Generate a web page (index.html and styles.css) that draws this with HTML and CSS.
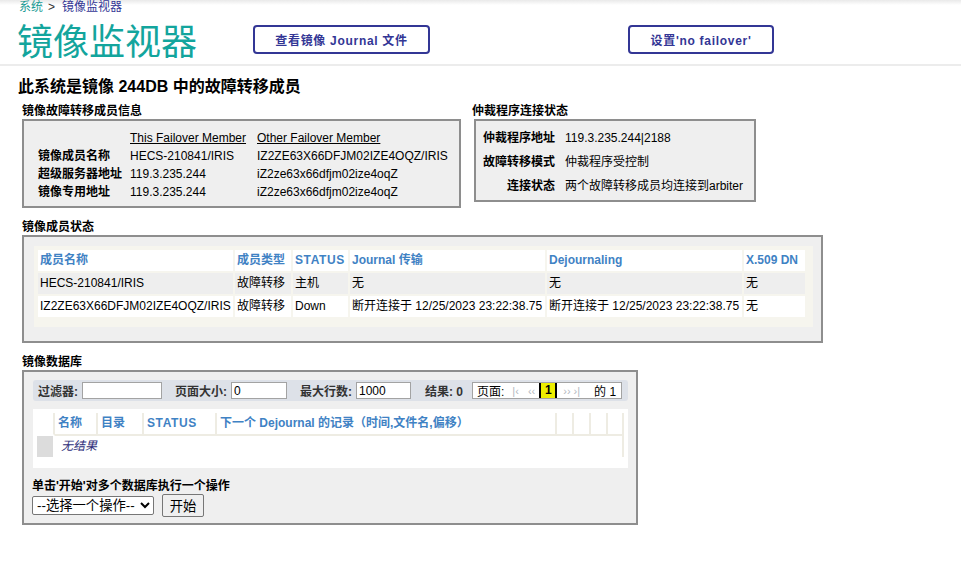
FILE: index.html
```html
<!DOCTYPE html>
<html lang="zh-CN">
<head>
<meta charset="utf-8">
<title>镜像监视器</title>
<link rel="stylesheet" href="styles.css">
</head>
<body>
<header class="top">
  <div class="crumbs"><span class="crumb-link">系统</span><span class="crumb-sep">&gt;</span><span class="crumb-cur">镜像监视器</span></div>
  <div class="titlebar">
    <h1 class="title">镜像监视器</h1>
    <button class="hbtn hbtn-journal">查看镜像 Journal 文件</button>
    <button class="hbtn hbtn-nofail">设置'no failover'</button>
  </div>
</header>
<main class="content">
  <h2 class="page-head">此系统是镜像 244DB 中的故障转移成员</h2>
  <div class="row-top">
    <section class="group group-info">
      <h3 class="sec-title">镜像故障转移成员信息</h3>
      <div class="box box-info">
        <div class="info-grid">
          <span></span><span class="u">This Failover Member</span><span class="u">Other Failover Member</span>
          <span class="lbl">镜像成员名称</span><span>HECS-210841/IRIS</span><span>IZ2ZE63X66DFJM02IZE4OQZ/IRIS</span>
          <span class="lbl">超级服务器地址</span><span>119.3.235.244</span><span>iZ2ze63x66dfjm02ize4oqZ</span>
          <span class="lbl">镜像专用地址</span><span>119.3.235.244</span><span>iZ2ze63x66dfjm02ize4oqZ</span>
        </div>
      </div>
    </section>
    <section class="group group-arb">
      <h3 class="sec-title">仲裁程序连接状态</h3>
      <div class="box box-arb">
        <div class="arb-grid">
          <span class="lbl">仲裁程序地址</span><span>119.3.235.244|2188</span>
          <span class="lbl">故障转移模式</span><span>仲裁程序受控制</span>
          <span class="lbl">连接状态</span><span>两个故障转移成员均连接到arbiter</span>
        </div>
      </div>
    </section>
  </div>

  <section class="group group-members">
    <h3 class="sec-title">镜像成员状态</h3>
    <div class="box box-members">
      <div class="members-panel">
        <table class="members">
          <colgroup><col class="mc-name"><col class="mc-type"><col class="mc-status"><col class="mc-journal"><col class="mc-dejour"><col class="mc-x509"></colgroup>
          <thead>
            <tr><th>成员名称</th><th>成员类型</th><th class="th-status">STATUS</th><th>Journal 传输</th><th>Dejournaling</th><th>X.509 DN</th></tr>
          </thead>
          <tbody>
            <tr class="odd"><td>HECS-210841/IRIS</td><td>故障转移</td><td>主机</td><td>无</td><td>无</td><td>无</td></tr>
            <tr class="even"><td>IZ2ZE63X66DFJM02IZE4OQZ/IRIS</td><td>故障转移</td><td>Down</td><td>断开连接于 12/25/2023 23:22:38.75</td><td>断开连接于 12/25/2023 23:22:38.75</td><td>无</td></tr>
          </tbody>
        </table>
      </div>
    </div>
  </section>

  <section class="group group-db">
    <h3 class="sec-title">镜像数据库</h3>
    <div class="box box-db">
      <div class="filterbar">
        <label class="flabel">过滤器:</label><input class="finput fi-filter" type="text" value="">
        <label class="flabel">页面大小:</label><input class="finput fi-size" type="text" value="0">
        <label class="flabel">最大行数:</label><input class="finput fi-max" type="text" value="1000">
        <span class="flabel results">结果: 0</span>
        <div class="pager">
          <span class="pg-label">页面:</span>
          <span class="pg-arrow pg-first">|‹</span>
          <span class="pg-arrow pg-prev">‹‹</span>
          <span class="pg-cur">1</span>
          <span class="pg-arrow pg-next">››</span>
          <span class="pg-arrow pg-last">›|</span>
          <span class="pg-of">的 1</span>
        </div>
      </div>
      <div class="db-panel">
        <table class="dbs">
          <colgroup><col class="dc-sel"><col class="dc-name"><col class="dc-dir"><col class="dc-status"><col class="dc-next"><col class="dc-e"><col class="dc-e"><col class="dc-e"><col class="dc-e2"></colgroup>
          <thead>
            <tr><th class="th-sel"></th><th>名称</th><th>目录</th><th class="th-status">STATUS</th><th>下一个 Dejournal 的记录（时间,文件名,偏移）</th><th></th><th></th><th></th><th></th></tr>
          </thead>
          <tbody>
            <tr><td class="td-sel"></td><td class="td-empty" colspan="8">无结果</td></tr>
          </tbody>
        </table>
      </div>
      <div class="action-title">单击'开始'对多个数据库执行一个操作</div>
      <div class="action-row">
        <select class="action-select"><option>--选择一个操作--</option></select>
        <button class="go-btn">开始</button>
      </div>
    </div>
  </section>
</main>
</body>
</html>
```

FILE: styles.css
```css
* { box-sizing: border-box; }
html, body { margin: 0; padding: 0; background: #fff; }
body {
  font-family: "Liberation Sans", Arial, "Noto Sans CJK SC", sans-serif;
  font-size: 12px;
  color: #000;
  width: 961px;
}

/* header */
.top {
  background: linear-gradient(#e9e9e9 0, #ffffff 5px);
  border-bottom: 2px solid #ececec;
}
.crumbs { height: 14px; line-height: 14px; padding-left: 19px; font-size: 12px; }
.crumb-link { color: #1b9b94; }
.crumb-sep { color: #333; margin: 0 7px 0 5px; }
.crumb-cur { color: #333695; }

.titlebar { display: flex; align-items: center; height: 50px; padding-left: 17px; }
.title {
  margin: 0;
  font-family: "Noto Sans CJK SC", sans-serif;
  font-weight: 400;
  font-size: 36px;
  line-height: 50px;
  color: #13a59d;
}
.hbtn {
  height: 29px;
  border: 2px solid #333695;
  border-radius: 4px;
  background: #fff;
  color: #333695;
  font-family: "Liberation Sans", Arial, "Noto Sans CJK SC", sans-serif;
  font-weight: bold;
  font-size: 12px;
  letter-spacing: 0.7px;
  padding: 0;
}
.hbtn-journal { width: 177px; margin-left: 56px; }
.hbtn-nofail { width: 146px; margin-left: 198px; }

/* content */
.content { padding: 11px 0 0 18px; }
.page-head { margin: 0; font-size: 16px; line-height: 20px; font-weight: bold; }
.row-top { display: flex; align-items: flex-start; margin-top: 6px; }
.group { margin-left: 4px; }
.group-arb { margin-left: 11px; }
.group-members, .group-db { margin-top: 11px; }
.sec-title { margin: 0; font-size: 12px; line-height: 16px; font-weight: bold; }
.box { border: 2px solid #8e8e8e; background: #efefef; }

.lbl { font-weight: bold; }

.box-info { width: 439px; padding: 8px 0 5px 14px; }
.info-grid { display: grid; grid-template-columns: 92px 127px auto; grid-auto-rows: 18px; line-height: 18px; }
.u { text-decoration: underline; }

.box-arb { width: 282px; margin-left: 2px; padding: 5px 0 2px 7px; }
.arb-grid { display: grid; grid-template-columns: 72px auto; column-gap: 10px; grid-auto-rows: 24px; line-height: 24px; }
.arb-grid .lbl { text-align: right; white-space: nowrap; }

/* members */
.box-members { width: 801px; padding: 9px 8px 14px 10px; }
.members-panel { background: #f6f5ee; padding: 2px 0 8px 2px; }
.members { table-layout: fixed; width: 771px; border-collapse: separate; border-spacing: 2px; }
.mc-name { width: 195px; }
.mc-type { width: 56px; }
.mc-status { width: 55px; }
.mc-journal { width: 195px; }
.mc-dejour { width: 195px; }
.mc-x509 { width: 61px; }
.members th, .members td { height: 21px; line-height: 21px; padding: 0 2px; text-align: left; white-space: nowrap; overflow: hidden; }
.members th { background: #fff; color: #3f82c4; font-weight: bold; }
.th-status { letter-spacing: 0.6px; }
.members .odd td { background: #eeeeee; }
.members .even td { background: #ffffff; }

/* databases */
.box-db { width: 616px; padding: 8px 8px 6px 9px; }
.filterbar {
  display: flex;
  align-items: center;
  height: 21px;
  padding-left: 5px;
  background: #dde1e8;
  border-radius: 3px;
}
.flabel { font-weight: bold; color: #333; margin-right: 4px; white-space: nowrap; }
.finput {
  height: 17px;
  border: 1px solid #a3a3a3;
  background: #fff;
  font-family: "Liberation Sans", Arial, sans-serif;
  font-size: 12px;
  color: #000;
  padding: 0 2px;
  margin: 0 13px 0 0;
}
.fi-filter { width: 80px; }
.fi-size { width: 56px; }
.fi-max { width: 55px; margin-right: 14px; }
.results { margin-right: 9px; }
.pager {
  display: flex;
  align-items: center;
  width: 150px;
  height: 17px;
  border: 1px solid #a3a3a3;
  background: #fff;
  padding-left: 4px;
  white-space: nowrap;
}
.pg-label { margin-right: 8px; }
.pg-arrow { color: #b3b8c0; font-size: 11px; }
.pg-prev { margin-left: 9px; }
.pg-cur {
  margin-left: 4px;
  width: 18px;
  height: 15px;
  line-height: 15px;
  text-align: center;
  background: #eeee00;
  border-left: 2px solid #000;
  border-right: 2px solid #000;
  font-weight: bold;
}
.pg-next { margin-left: 6px; }
.pg-last { margin-left: 3px; }
.pg-of { margin-left: 14px; }

.db-panel { background: #fff; margin-top: 8px; padding: 4px 0 11px 4px; }
.dbs { table-layout: fixed; width: 587px; border-collapse: separate; border-spacing: 0; }
.dc-sel { width: 18px; }
.dc-name { width: 43px; }
.dc-dir { width: 46px; }
.dc-status { width: 73px; }
.dc-next { width: 340px; }
.dc-e { width: 17px; }
.dc-e2 { width: 16px; }
.dbs th {
  height: 23px;
  line-height: 21px;
  padding: 0 0 0 3px;
  text-align: left;
  color: #3f82c4;
  font-weight: bold;
  background: #fff;
  border-right: 2px solid #eeece3;
  border-bottom: 2px solid #eeece3;
  white-space: nowrap;
  overflow: hidden;
}
.dbs th.th-sel { border-bottom-color: #fff; }
.dbs td { height: 21px; line-height: 21px; padding: 0; }
.td-sel { background: #dcdcdc; border-right: 2px solid #fff; }
.td-empty {
  padding-left: 6px !important;
  font-style: italic;
  color: #2e2e7a;
  border-right: 2px solid #eeece3;
}

.action-title { margin: 10px 0 0 -1px; font-weight: bold; line-height: 16px; }
.action-row { display: flex; align-items: center; gap: 8px; height: 23px; margin-left: -1px; }
.action-select {
  width: 122px;
  height: 19px;
  font-family: "Liberation Sans", Arial, "Noto Sans CJK SC", sans-serif;
  font-size: 13.33px;
  border: 1px solid #767676;
  border-radius: 2px;
  background: #fff;
  color: #000;
}
.go-btn {
  width: 42px;
  height: 23px;
  padding: 0;
  font-family: "Liberation Sans", Arial, "Noto Sans CJK SC", sans-serif;
  font-size: 13.33px;
  border: 1px solid #767676;
  border-radius: 2px;
  background: #efefef;
  color: #000;
}
```
